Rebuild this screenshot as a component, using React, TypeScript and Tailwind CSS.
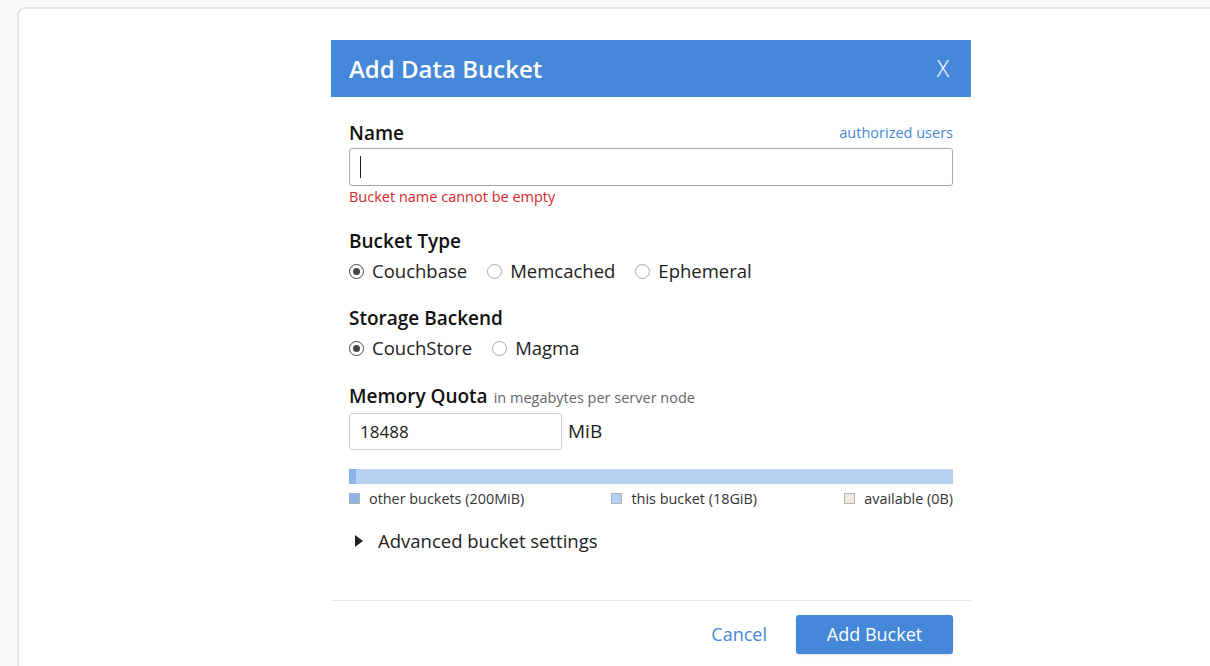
import React from 'react';

interface RadioProps {
  label: string;
  checked?: boolean;
}

const Radio: React.FC<RadioProps> = ({ label, checked }) => (
  <label className="flex items-center gap-[8px] text-[18.5px] leading-[26px] text-[#222]">
    <span
      className={`flex h-[15px] w-[15px] items-center justify-center rounded-full border bg-white ${
        checked ? 'border-[#444] border-[1.5px]' : 'border-[#a8a8a8]'
      }`}
    >
      {checked && <span className="h-[7px] w-[7px] rounded-full bg-[#444]" />}
    </span>
    {label}
  </label>
);

const LegendItem: React.FC<{ color: string; label: string }> = ({ color, label }) => (
  <div className="flex items-center gap-[9px]">
    <span className={`h-[11px] w-[11px] border border-[#b3b3b3] ${color}`} />
    <span>{label}</span>
  </div>
);

const App: React.FC = () => {
  return (
    <div
      className="min-h-screen overflow-hidden bg-[#fafafa] pl-[17px] pt-[7px]"
      style={{ fontFamily: '"Open Sans", "Noto Sans", sans-serif' }}
    >
      <div className="min-h-[659px] rounded-tl-lg border-l-2 border-t-2 border-[#e6e6e6] bg-white pt-[31px]">
        <div className="ml-[312px] w-[640px] bg-white">
          <div className="flex h-[57px] items-center justify-between bg-[#4587d8] pl-[18px] pr-[22px] text-white">
            <h2 className="text-[24px] font-semibold">Add Data Bucket</h2>
            <span className="text-[23px] font-light">X</span>
          </div>

          <div className="px-[18px] pt-[24px]">
            <div className="flex items-center justify-between">
              <span className="text-[19px] font-semibold leading-[24px] text-[#111]">Name</span>
              <a className="text-[14.5px] text-[#4587d8]">authorized users</a>
            </div>
            <div className="mt-[3px] flex h-[38px] items-center rounded-[3px] border border-[#a9a9a9] px-[10px]">
              <span className="h-[22px] w-[1px] bg-[#222]" />
            </div>
            <div className="mt-[2px] text-[14.5px] leading-[18px] text-[#d3282b]">Bucket name cannot be empty</div>

            <div className="mt-[23px] text-[19px] font-semibold leading-[24px] text-[#111]">Bucket Type</div>
            <div className="mt-[5px] flex gap-[20px]">
              <Radio label="Couchbase" checked />
              <Radio label="Memcached" />
              <Radio label="Ephemeral" />
            </div>

            <div className="mt-[22px] text-[19px] font-semibold leading-[24px] text-[#111]">Storage Backend</div>
            <div className="mt-[5px] flex gap-[20px]">
              <Radio label="CouchStore" checked />
              <Radio label="Magma" />
            </div>

            <div className="mt-[23px] flex items-baseline gap-[6px]">
              <span className="text-[19px] font-semibold leading-[24px] text-[#111]">Memory Quota</span>
              <span className="text-[14.5px] text-[#666]">in megabytes per server node</span>
            </div>
            <div className="mt-[4px] flex items-center gap-[6px]">
              <div className="flex h-[37px] w-[213px] items-center rounded-[3px] border border-[#cfcfcf] px-[10px] text-[17px] text-[#222]">
                18488
              </div>
              <span className="text-[19px] text-[#222]">MiB</span>
            </div>

            <div className="mt-[19px] flex h-[15px]">
              <div className="w-[7px] bg-[#8ab3e6]" />
              <div className="flex-1 bg-[#b5d0f0]" />
            </div>
            <div className="mt-[6px] flex justify-between text-[14.4px] leading-[18px] text-[#333]">
              <LegendItem color="bg-[#8ab3e6]" label="other buckets (200MiB)" />
              <LegendItem color="bg-[#b5d0f0]" label="this bucket (18GiB)" />
              <LegendItem color="bg-[#efebe3]" label="available (0B)" />
            </div>

            <div className="mt-[20px] flex items-center gap-[15px] pl-[6px] text-[18.5px] leading-[26px] text-[#222]">
              <svg width="8" height="12" viewBox="0 0 8 12">
                <path d="M0 0 L8 6 L0 12 Z" fill="#222" />
              </svg>
              <span>Advanced bucket settings</span>
            </div>
          </div>

          <div className="mt-[46px] border-t border-[#e8e8e8]" />
          <div className="flex items-center justify-end gap-[29px] px-[18px] pt-[14px]">
            <a className="text-[18px] text-[#4587d8]">Cancel</a>
            <button className="h-[39px] w-[157px] rounded-[3px] bg-[#4587d8] text-[18px] text-white shadow-sm">
              Add Bucket
            </button>
          </div>
        </div>
      </div>
    </div>
  );
};

export default App;
